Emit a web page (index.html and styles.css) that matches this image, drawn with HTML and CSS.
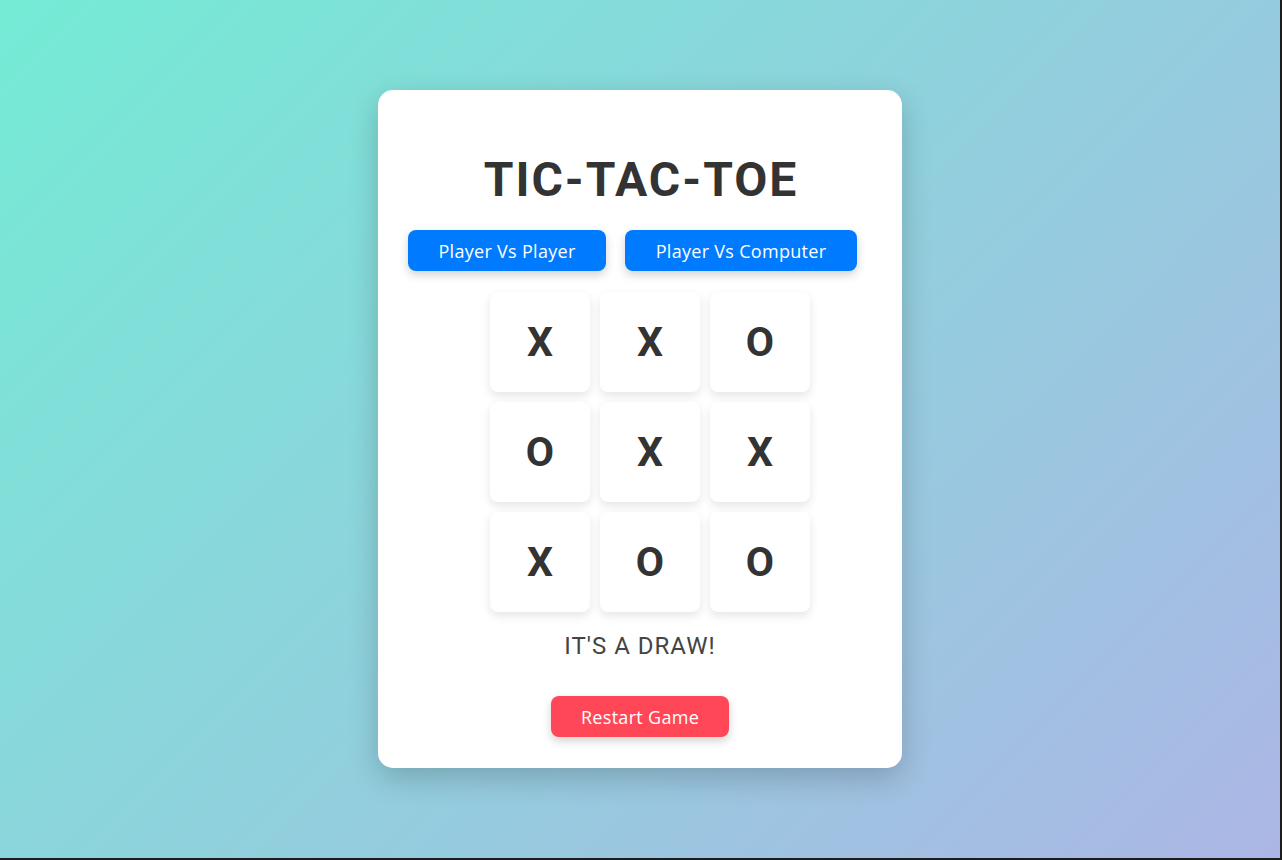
FILE: index.html
```html
<!DOCTYPE html>
<html lang="en">
<head>
<meta charset="utf-8">
<title>Tic-Tac-Toe</title>
<link rel="stylesheet" href="styles.css">
</head>
<body>
<main class="screen">
  <section class="card">
    <h1 class="title">TIC-TAC-TOE</h1>
    <div class="modes">
      <button class="btn btn-blue btn-pvp">Player Vs Player</button>
      <button class="btn btn-blue btn-pvc">Player Vs Computer</button>
    </div>
    <div class="board">
      <div class="cell">X</div>
      <div class="cell">X</div>
      <div class="cell">O</div>
      <div class="cell">O</div>
      <div class="cell">X</div>
      <div class="cell">X</div>
      <div class="cell">X</div>
      <div class="cell">O</div>
      <div class="cell">O</div>
    </div>
    <p class="status">IT'S A DRAW!</p>
    <button class="btn btn-red">Restart Game</button>
  </section>
</main>
</body>
</html>
```
FILE: styles.css
```css
html {
  background: #1c1c1c;
}
body {
  margin: 0;
  width: 1282px;
  height: 860px;
  overflow: hidden;
}
.screen {
  width: 1280px;
  height: 858px;
  background: linear-gradient(135deg, #74ebd5 0%, #acb6e5 100%);
  display: flex;
  align-items: center;
  justify-content: center;
}
.card {
  width: 524px;
  box-sizing: border-box;
  background: #fff;
  border-radius: 15px;
  box-shadow: 0 10px 30px rgba(0, 0, 0, 0.2);
  padding: 62px 0 31px;
  display: flex;
  flex-direction: column;
  align-items: center;
}
.title {
  margin: 0 0 22px;
  font-family: Roboto, "Liberation Sans", sans-serif;
  font-weight: 700;
  font-size: 48px;
  line-height: 56px;
  letter-spacing: 2px;
  text-indent: 2px;
  color: #333;
}
.modes {
  display: flex;
  gap: 19px;
  padding-right: 15px;
}
.btn {
  border: none;
  border-radius: 8px;
  height: 41px;
  padding: 0;
  font-family: "Open Sans", "Noto Sans", sans-serif;
  font-size: 18px;
  letter-spacing: 0.3px;
  color: #fff;
  box-shadow: 0 4px 10px rgba(0, 0, 0, 0.18);
  cursor: pointer;
}
.btn-pvp {
  width: 198px;
}
.btn-pvc {
  width: 232px;
}
.btn-blue {
  background: #007bff;
}
.btn-red {
  width: 178px;
  background: #ff4757;
}
.board {
  margin: 21px 0 0 20px;
  display: grid;
  grid-template-columns: repeat(3, 100px);
  grid-auto-rows: 100px;
  gap: 10px;
}
.cell {
  background: #fff;
  border-radius: 8px;
  box-shadow: 0 4px 10px rgba(0, 0, 0, 0.1);
  display: flex;
  align-items: center;
  justify-content: center;
  font-family: Roboto, "Liberation Sans", sans-serif;
  font-weight: 700;
  font-size: 41px;
  color: #333;
}
.status {
  margin: 20px 0 36px;
  font-family: Roboto, "Liberation Sans", sans-serif;
  font-size: 24px;
  line-height: 28px;
  letter-spacing: 1px;
  color: #444;
}
```
